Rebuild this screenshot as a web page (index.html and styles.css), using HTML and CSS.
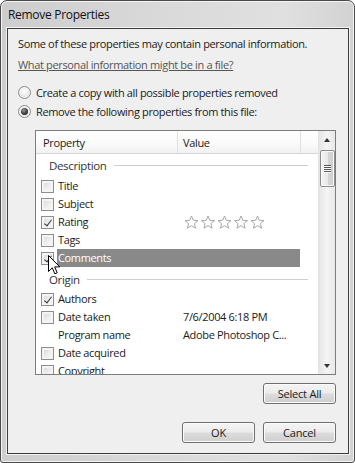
FILE: index.html
```html
<!DOCTYPE html>
<html>
<head>
<meta charset="utf-8">
<link rel="stylesheet" href="styles.css">
</head>
<body>
<div class="window">
  <div class="titlebar">Remove Properties</div>
  <div class="client">
    <p class="intro">Some of these properties may contain personal information.</p>
    <a class="link" href="#">What personal information might be in a file?</a>
    <div class="options">
      <div class="radio-row"><span class="radio"></span><span>Create a copy with all possible properties removed</span></div>
      <div class="radio-row"><span class="radio checked"></span><span>Remove the following properties from this file:</span></div>
    </div>
    <div class="listbox">
      <div class="list-main">
        <div class="header">
          <div class="hcell hprop">Property</div>
          <div class="hcell hval">Value</div>
          <div class="hcell hrest"></div>
        </div>
        <div class="rows">
          <div class="group"><span>Description</span><span class="rule"></span></div>
          <div class="row"><span class="cbcell"><span class="cb"></span></span><span class="name">Title</span><span class="val"></span></div>
          <div class="row"><span class="cbcell"><span class="cb"></span></span><span class="name">Subject</span><span class="val"></span></div>
          <div class="row"><span class="cbcell"><span class="cb checked"></span></span><span class="name">Rating</span><span class="val stars">
            <svg width="84" height="15" viewBox="0 0 84 15">
              <g fill="#fff" stroke="#a8a8a8" stroke-width="1" stroke-linejoin="round">
                <path d="M7.5 1 L9.3 5.3 L14 5.6 L10.4 8.6 L11.6 13.2 L7.5 10.7 L3.4 13.2 L4.6 8.6 L1 5.6 L5.7 5.3 Z"/>
                <path transform="translate(16.5 0)" d="M7.5 1 L9.3 5.3 L14 5.6 L10.4 8.6 L11.6 13.2 L7.5 10.7 L3.4 13.2 L4.6 8.6 L1 5.6 L5.7 5.3 Z"/>
                <path transform="translate(33 0)" d="M7.5 1 L9.3 5.3 L14 5.6 L10.4 8.6 L11.6 13.2 L7.5 10.7 L3.4 13.2 L4.6 8.6 L1 5.6 L5.7 5.3 Z"/>
                <path transform="translate(49.5 0)" d="M7.5 1 L9.3 5.3 L14 5.6 L10.4 8.6 L11.6 13.2 L7.5 10.7 L3.4 13.2 L4.6 8.6 L1 5.6 L5.7 5.3 Z"/>
                <path transform="translate(66 0)" d="M7.5 1 L9.3 5.3 L14 5.6 L10.4 8.6 L11.6 13.2 L7.5 10.7 L3.4 13.2 L4.6 8.6 L1 5.6 L5.7 5.3 Z"/>
              </g>
            </svg></span></div>
          <div class="row"><span class="cbcell"><span class="cb"></span></span><span class="name">Tags</span><span class="val"></span></div>
          <div class="row selected"><span class="cbcell"><span class="cb checked"></span></span><span class="name">Comments</span><span class="val"></span></div>
          <div class="group group2"><span>Origin</span><span class="rule"></span></div>
          <div class="row"><span class="cbcell"><span class="cb checked"></span></span><span class="name">Authors</span><span class="val"></span></div>
          <div class="row"><span class="cbcell"><span class="cb"></span></span><span class="name">Date taken</span><span class="val">7/6/2004 6:18 PM</span></div>
          <div class="row"><span class="cbcell"></span><span class="name">Program name</span><span class="val">Adobe Photoshop C...</span></div>
          <div class="row"><span class="cbcell"><span class="cb"></span></span><span class="name">Date acquired</span><span class="val"></span></div>
          <div class="row"><span class="cbcell"><span class="cb"></span></span><span class="name">Copyright</span><span class="val"></span></div>
        </div>
      </div>
      <div class="scrollbar">
        <div class="sb-btn"><span class="arrow up"></span></div>
        <div class="sb-track">
          <div class="thumb"><span class="grip"></span><span class="grip"></span><span class="grip"></span><span class="grip"></span></div>
        </div>
        <div class="sb-btn"><span class="arrow down"></span></div>
      </div>
    </div>
    <div class="btnrow"><button class="btn">Select All</button></div>
    <div class="btnrow bottom"><button class="btn">OK</button><button class="btn">Cancel</button></div>
  </div>
  <svg class="cursor" width="13" height="21" viewBox="0 0 13 21">
    <path d="M0.5 0.5 L0.5 16.5 L4.3 12.8 L6.8 18.8 L9.2 17.8 L6.7 11.9 L11.8 11.9 Z" fill="#fff" stroke="#000" stroke-width="1" stroke-linejoin="miter"/>
  </svg>
</div>
</body>
</html>
```

FILE: styles.css
```css
* { box-sizing: border-box; }
html, body { margin: 0; padding: 0; }
body {
  width: 355px;
  height: 463px;
  overflow: hidden;
  background: #fff;
  font-family: "Open Sans", "Noto Sans", sans-serif;
  font-size: 11px;
  letter-spacing: -0.35px;
  color: #1a1a1a;
}
.window {
  position: relative;
  width: 355px;
  height: 463px;
  border: 1px solid #4a4a4a;
  border-radius: 7px 7px 3px 3px;
  background: linear-gradient(90deg, #cdcdcd 0%, #d9d9d9 45%, #e0e0e0 80%, #d2d2d2 100%);
  box-shadow: inset 0 0 0 1px #f4f4f4;
  padding: 0 5px 8px 6px;
  display: flex;
  flex-direction: column;
}
.titlebar {
  height: 27px;
  line-height: 27px;
  padding-left: 1px;
  font-size: 12px;
  letter-spacing: -0.3px;
  color: #111;
}
.client {
  height: 426px;
  border: 1px solid #3c3c3c;
  box-shadow: 0 0 0 1px #f2f2f2;
  background: #efefef;
  padding: 7px 12px 0 10px;
  display: flex;
  flex-direction: column;
}
.intro {
  margin: 0;
  line-height: 16px;
  height: 16px;
  white-space: nowrap;
}
.link {
  margin-top: 5px;
  line-height: 16px;
  color: #555;
  text-decoration: underline;
  align-self: flex-start;
  white-space: nowrap;
}
.options {
  margin-top: 10px;
  display: flex;
  flex-direction: column;
}
.radio-row {
  height: 19px;
  display: flex;
  align-items: center;
  gap: 5px;
  white-space: nowrap;
}
.radio {
  width: 13px;
  height: 13px;
  border-radius: 50%;
  border: 1px solid #8a8a8a;
  background: radial-gradient(circle at 50% 40%, #ffffff 0%, #e6e6e6 60%, #cfcfcf 100%);
  box-shadow: inset 0 0 0 1px #f6f6f6;
  position: relative;
  flex: none;
}
.radio.checked::after {
  content: "";
  position: absolute;
  left: 2px; top: 2px;
  width: 7px; height: 7px;
  border-radius: 50%;
  background: radial-gradient(circle at 40% 35%, #9a9a9a 0%, #3a3a3a 55%, #1c1c1c 100%);
}
.listbox {
  margin-top: 9px;
  margin-left: 17px;
  height: 245px;
  border: 1px solid #7d7d7d;
  background: #fff;
  display: flex;
  overflow: hidden;
}
.list-main {
  width: 282px;
  display: flex;
  flex-direction: column;
  overflow: hidden;
}
.header {
  height: 23px;
  display: flex;
  background: linear-gradient(#ffffff 0%, #fbfbfb 50%, #f2f2f2 100%);
  border-bottom: 1px solid #d6d6d6;
  flex: none;
}
.hcell {
  line-height: 22px;
  padding-top: 1px;
  border-right: 1px solid #e0e0e0;
  white-space: nowrap;
}
.hprop { width: 142px; padding-left: 7px; }
.hval { width: 123px; padding-left: 5px; }
.hrest { flex: 1; border-right: none; }
.rows { display: flex; flex-direction: column; }
.group {
  height: 23px;
  display: flex;
  align-items: center;
  padding: 0 10px 0 13px;
  color: #333;
  font-size: 11.5px;
  flex: none;
}
.group2 { height: 23px; padding-top: 1px; }
.group .rule {
  flex: 1;
  height: 1px;
  background: #cfcfcf;
  margin-left: 7px;
}
.row {
  height: 18px;
  display: flex;
  align-items: center;
  flex: none;
  white-space: nowrap;
}
.cbcell {
  width: 21px;
  height: 18px;
  padding-left: 5px;
  display: flex;
  align-items: center;
  flex: none;
}
.cb {
  width: 13px;
  height: 13px;
  border: 1px solid #8e8e8e;
  background: linear-gradient(135deg, #d4d4d4 0%, #f0f0f0 60%, #fbfbfb 100%);
  box-shadow: inset 0 0 0 2px #f4f4f4;
  position: relative;
}
.cb.checked::after {
  content: "";
  position: absolute;
  left: 4px; top: 1px;
  width: 3px; height: 7px;
  border-right: 1.6px solid #3a3a3a;
  border-bottom: 1.6px solid #3a3a3a;
  transform: rotate(38deg);
}
.name {
  width: 121px;
  height: 18px;
  line-height: 18px;
  padding-left: 1px;
  flex: none;
}
.val {
  width: 122px;
  height: 18px;
  line-height: 18px;
  padding-left: 5px;
  flex: none;
}
.stars { display: flex; align-items: center; padding-left: 6px; }
.row.selected .name, .row.selected .val {
  background: #898989;
  color: #fff;
}
.scrollbar {
  width: 17px;
  display: flex;
  flex-direction: column;
  background: linear-gradient(90deg, #e6e6e6, #f4f4f4 50%, #e8e8e8);
  border-left: 1px solid #e2e2e2;
  flex: none;
}
.sb-btn {
  height: 17px;
  display: flex;
  align-items: center;
  justify-content: center;
  flex: none;
}
.arrow {
  width: 0; height: 0;
  border-left: 3.5px solid transparent;
  border-right: 3.5px solid transparent;
}
.arrow.up { border-bottom: 4px solid #333; }
.arrow.down { border-top: 4px solid #333; }
.sb-track {
  flex: 1;
  padding: 2px 0 0 1px;
}
.thumb {
  width: 15px;
  height: 37px;
  border: 1px solid #8c8c8c;
  border-radius: 2px;
  background: linear-gradient(90deg, #f4f4f4 0%, #e9e9e9 50%, #d6d6d6 52%, #cfcfcf 100%);
  box-shadow: inset 0 0 0 1px #fafafa;
  display: flex;
  flex-direction: column;
  justify-content: center;
  align-items: center;
  gap: 1px;
}
.grip {
  width: 7px;
  height: 1px;
  background: #555;
  box-shadow: 0 1px 0 #fff;
}
.btnrow {
  display: flex;
  justify-content: flex-end;
  gap: 8px;
  margin-top: 8px;
}
.btnrow.bottom { margin-top: 18px; }
.btn {
  width: 73px;
  height: 21px;
  padding: 0;
  border: 1px solid #6f6f6f;
  border-radius: 3px;
  background: linear-gradient(#f4f4f4 0%, #ececec 48%, #dcdcdc 52%, #cfcfcf 100%);
  box-shadow: inset 0 0 0 1px #fbfbfb;
  font-family: inherit;
  font-size: 11px;
  letter-spacing: -0.2px;
  color: #1a1a1a;
}
.cursor {
  position: absolute;
  left: 47px;
  top: 254px;
}
```
